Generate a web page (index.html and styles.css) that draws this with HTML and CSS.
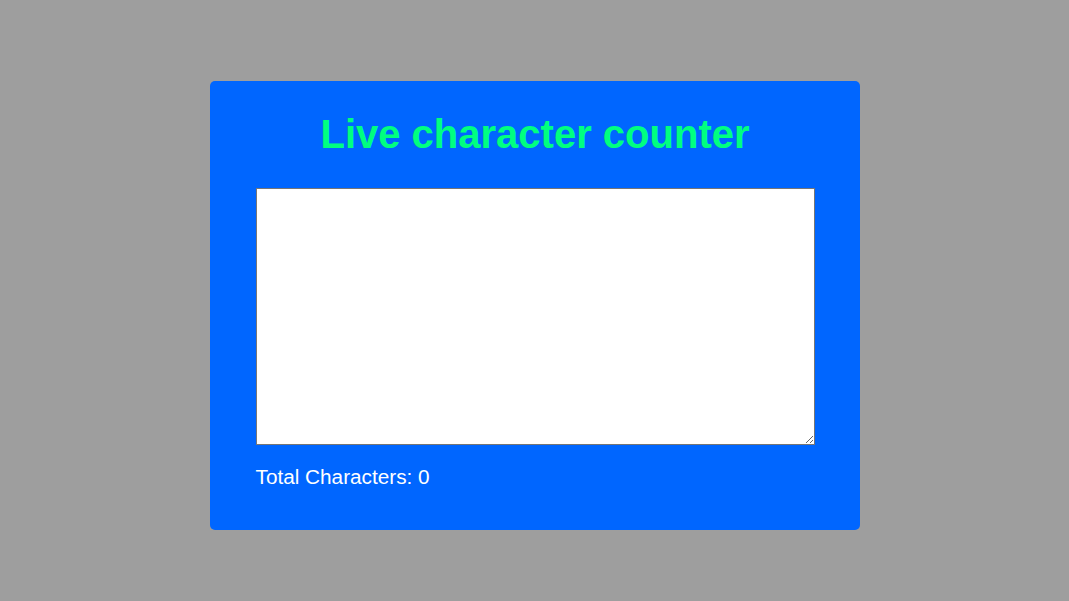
FILE: index.html
```html
<!DOCTYPE html>
<html lang="en">
<head>
<meta charset="utf-8">
<title>Live character counter</title>
<link rel="stylesheet" href="styles.css">
</head>
<body>
<div class="card">
  <h1 class="title">Live character counter</h1>
  <textarea class="input"></textarea>
  <p class="count">Total Characters: <span>0</span></p>
</div>
</body>
</html>
```
FILE: styles.css
```css
html, body {
  margin: 0;
  height: 100%;
}
body {
  background: #9e9e9e;
  font-family: "Liberation Sans", Arial, sans-serif;
  display: flex;
  align-items: center;
  justify-content: center;
}
.card {
  box-sizing: border-box;
  width: 650px;
  background: #0066ff;
  border-radius: 5px;
  padding: 30px 45px 41px 46px;
  margin-top: 10px;
}
.title {
  margin: 0 0 31px;
  font-size: 40px;
  line-height: 46px;
  font-weight: bold;
  color: #00ff80;
  text-align: center;
}
.input {
  display: block;
  box-sizing: border-box;
  width: 559px;
  height: 257px;
  margin: 0;
  border: 1px solid #767676;
  background: #fff;
  padding: 2px;
  font-family: "Liberation Sans", Arial, sans-serif;
}
.count {
  margin: 20px 0 0;
  font-size: 20.75px;
  line-height: 24px;
  color: #fff;
}
```
